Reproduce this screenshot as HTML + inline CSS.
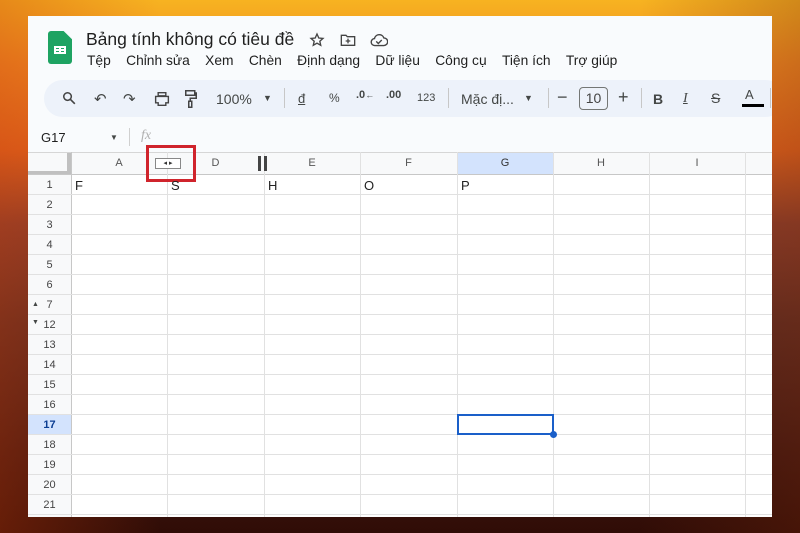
<!DOCTYPE html>
<html><head><meta charset="utf-8"><style>
*{margin:0;padding:0;box-sizing:border-box}
body{width:800px;height:533px;overflow:hidden;position:relative;font-family:"Liberation Sans",Arial,sans-serif;
background:linear-gradient(180deg,#f7b321 0%,#f08a22 12%,#e0641e 28%,#8a3e2c 42%,#5e2c22 60%,#3e1610 85%,#300c06 100%);}
.bg2{position:absolute;inset:0;background:linear-gradient(90deg,rgba(200,60,10,.35),rgba(0,0,0,0) 20%,rgba(0,0,0,0) 80%,rgba(120,40,10,.3));}
.panel{position:absolute;left:28px;top:16px;width:744px;height:501px;background:#f9fbfd;overflow:hidden}
.abs{position:absolute}
.t{position:absolute;white-space:nowrap;color:#444746}
.grid{position:absolute;left:0;top:136px;width:744px;height:365px;background:#fff}
.vl{position:absolute;top:0;width:1px;background:#e1e1e1;height:365px}
.hl{position:absolute;left:0;height:1px;background:#e1e1e1;width:744px}
.rn{position:absolute;left:0;width:43px;text-align:center;font-size:11px;color:#444}
.ch{position:absolute;top:0;height:23px;line-height:23px;text-align:center;font-size:11px;color:#555}
.cv{position:absolute;font-size:13px;color:#222}
</style></head><body><div class="bg2"></div>
<div class="panel">
 <div class="abs" style="left:20px;top:15px;width:24px;height:33px;background:#1ea362;border-radius:3px;clip-path:polygon(0 0,65% 0,100% 25%,100% 100%,0 100%)"></div>
 <div class="abs" style="left:26px;top:30px;width:12px;height:8px;border:2px solid #fff;background:#1ea362"></div>
 <div class="abs" style="left:31px;top:30px;width:2px;height:8px;background:#fff"></div>
 <div class="abs" style="left:26px;top:33px;width:12px;height:2px;background:#fff"></div>
 <div class="t" style="left:58px;top:13px;font-size:17.5px;color:#1f1f1f">Bảng tính không có tiêu đề</div>
 <svg class="abs" style="left:281px;top:16px" width="16" height="16" viewBox="0 0 24 24"><path d="M12 3l2.7 6 6.3.6-4.8 4.2 1.4 6.2L12 16.8 6.4 20l1.4-6.2L3 9.6l6.3-.6z" fill="none" stroke="#444" stroke-width="2"/></svg>
 <svg class="abs" style="left:312px;top:17px" width="16" height="14" viewBox="0 0 24 20"><path d="M2 3h7l2 2h11v13H2z" fill="none" stroke="#444" stroke-width="2"/><path d="M12 8v7M8.5 11.5h7" stroke="#444" stroke-width="2"/></svg>
 <svg class="abs" style="left:342px;top:17px" width="18" height="14" viewBox="0 0 26 20"><path d="M7 18a5 5 0 0 1-.5-10A7 7 0 0 1 20 7a5 5 0 0 1 0 11z" fill="none" stroke="#444" stroke-width="2"/><path d="M9 12l3 3 5-5" fill="none" stroke="#444" stroke-width="2"/></svg>
 <div class="t" style="left:59px;top:37px;font-size:13.8px;color:#1f1f1f">Tệp&nbsp;&nbsp;&nbsp;&nbsp;Chỉnh sửa&nbsp;&nbsp;&nbsp;&nbsp;Xem&nbsp;&nbsp;&nbsp;&nbsp;Chèn&nbsp;&nbsp;&nbsp;&nbsp;Định dạng&nbsp;&nbsp;&nbsp;&nbsp;Dữ liệu&nbsp;&nbsp;&nbsp;&nbsp;Công cụ&nbsp;&nbsp;&nbsp;&nbsp;Tiện ích&nbsp;&nbsp;&nbsp;&nbsp;Trợ giúp</div>
 <div class="abs" style="left:16px;top:64px;width:740px;height:37px;background:#edf2fa;border-radius:19px"></div>
 <svg class="abs" style="left:34px;top:75px" width="14" height="14" viewBox="0 0 24 24"><circle cx="9.5" cy="9.5" r="6.5" fill="none" stroke="#444" stroke-width="2.6"/><path d="M14.5 14.5L22 22" stroke="#444" stroke-width="2.8"/></svg>
 <div class="t" style="left:66px;top:74px;font-size:15px">↶</div>
 <div class="t" style="left:95px;top:74px;font-size:15px">↷</div>
 <svg class="abs" style="left:126px;top:76px" width="16" height="14" viewBox="0 0 24 22"><path d="M6 1h12v5H6zM2 7h20v10h-4v4H6v-4H2z" fill="none" stroke="#444" stroke-width="2.2"/></svg>
 <svg class="abs" style="left:157px;top:74px" width="12" height="18" viewBox="0 0 16 24"><path d="M1 1h12v6H1zM13 4h2v7H7v4M5 15h4v8H5z" fill="none" stroke="#444" stroke-width="2"/></svg>
 <div class="t" style="left:188px;top:75px;font-size:14px">100%</div>
 <div class="t" style="left:235px;top:77px;font-size:9px">▼</div>
 <div class="abs" style="left:256px;top:72px;width:1px;height:20px;background:#c7c7c7"></div>
 <div class="t" style="left:270px;top:75px;font-size:13px;text-decoration:underline">đ</div>
 <div class="t" style="left:301px;top:75px;font-size:12px">%</div>
 <div class="t" style="left:328px;top:73px;font-size:11px;font-weight:bold">.0<span style="font-size:9px">←</span></div>
 <div class="t" style="left:358px;top:73px;font-size:11px;font-weight:bold">.00</div>
 <div class="t" style="left:389px;top:76px;font-size:11px">123</div>
 <div class="abs" style="left:420px;top:72px;width:1px;height:20px;background:#c7c7c7"></div>
 <div class="t" style="left:433px;top:75px;font-size:14px">Mặc đị...</div>
 <div class="t" style="left:496px;top:77px;font-size:9px">▼</div>
 <div class="abs" style="left:520px;top:72px;width:1px;height:20px;background:#c7c7c7"></div>
 <div class="t" style="left:529px;top:71px;font-size:18px">−</div>
 <div class="abs" style="left:551px;top:71px;width:29px;height:23px;border:1.5px solid #747775;border-radius:4px;font-size:14px;color:#444;text-align:center;line-height:20px">10</div>
 <div class="t" style="left:590px;top:71px;font-size:18px">+</div>
 <div class="abs" style="left:613px;top:72px;width:1px;height:20px;background:#c7c7c7"></div>
 <div class="t" style="left:625px;top:75px;font-size:14px;font-weight:bold">B</div>
 <div class="t" style="left:655px;top:75px;font-size:14px;font-style:italic;font-family:'Liberation Serif',serif;text-decoration:underline">I</div>
 <div class="t" style="left:683px;top:74px;font-size:14px;text-decoration:line-through">S</div>
 <div class="t" style="left:717px;top:71px;font-size:13px">A</div>
 <div class="abs" style="left:714px;top:88px;width:22px;height:3px;background:#000"></div>
 <div class="abs" style="left:742px;top:72px;width:1px;height:20px;background:#c7c7c7"></div>
 <div class="t" style="left:13px;top:114px;font-size:13px;color:#1f1f1f">G17</div>
 <div class="t" style="left:82px;top:117px;font-size:8px">▼</div>
 <div class="abs" style="left:101px;top:112px;width:1px;height:18px;background:#d0d0d0"></div>
 <div class="t" style="left:113px;top:112px;font-size:14px;font-style:italic;color:#b0b0b0;font-family:'Liberation Serif',serif">fx</div>
 <div class="grid">
  <div class="abs" style="left:0;top:0;width:744px;height:23px;background:#f8f9fa"></div>
  <div class="abs" style="left:0;top:0;width:43px;height:365px;background:#f8f9fa"></div>
  <div class="abs" style="left:429px;top:0;width:96px;height:23px;background:#d3e3fd"></div>
  <div class="abs" style="left:0;top:263px;width:43px;height:20px;background:#d3e3fd"></div>
  <div class="abs" style="left:39px;top:0;width:4px;height:23px;background:#c0c0c0"></div>
  <div class="abs" style="left:0;top:19px;width:43px;height:4px;background:#c0c0c0"></div>
  <div class="hl" style="top:0;background:#d6d6d6"></div>
  <div class="hl" style="top:22px;background:#c7c7c7"></div>
  <div class="vl" style="left:43px;background:#c7c7c7"></div>
  <div class="vl" style="left:139px"></div><div class="vl" style="left:236px"></div><div class="vl" style="left:332px"></div><div class="vl" style="left:429px"></div><div class="vl" style="left:525px"></div><div class="vl" style="left:621px"></div><div class="vl" style="left:717px"></div>
  <div class="abs" style="left:230px;top:4px;width:3px;height:15px;background:#444"></div>
  <div class="abs" style="left:236px;top:4px;width:3px;height:15px;background:#444"></div>
  <div class="ch" style="left:43px;width:96px">A</div>
  <div class="abs" style="left:127px;top:6px;width:26px;height:11px;border:1px solid #888;background:#fff;font-size:7px;line-height:9px;text-align:center;color:#333">◂ ▸</div>
  <div class="abs" style="left:118px;top:-7px;width:50px;height:37px;border:3px solid #d0242c"></div>
  <div class="ch" style="left:139px;width:97px">D</div>
  <div class="ch" style="left:236px;width:96px">E</div>
  <div class="ch" style="left:332px;width:97px">F</div>
  <div class="ch" style="left:429px;width:96px;color:#333">G</div>
  <div class="ch" style="left:525px;width:96px">H</div>
  <div class="ch" style="left:621px;width:96px">I</div>
  <div class="cv" style="left:47px;top:26px">F</div>
  <div class="cv" style="left:143px;top:26px">S</div>
  <div class="cv" style="left:240px;top:26px">H</div>
  <div class="cv" style="left:336px;top:26px">O</div>
  <div class="cv" style="left:433px;top:26px">P</div>
  <div class="hl" style="top:42px"></div><div class="hl" style="top:62px"></div><div class="hl" style="top:82px"></div><div class="hl" style="top:102px"></div><div class="hl" style="top:122px"></div><div class="hl" style="top:142px"></div><div class="hl" style="top:162px"></div><div class="hl" style="top:182px"></div><div class="hl" style="top:202px"></div><div class="hl" style="top:222px"></div><div class="hl" style="top:242px"></div><div class="hl" style="top:262px"></div><div class="hl" style="top:282px"></div><div class="hl" style="top:302px"></div><div class="hl" style="top:322px"></div><div class="hl" style="top:342px"></div><div class="hl" style="top:362px"></div>
  <div class="rn" style="top:27px">1</div><div class="rn" style="top:47px">2</div><div class="rn" style="top:67px">3</div><div class="rn" style="top:87px">4</div><div class="rn" style="top:107px">5</div><div class="rn" style="top:127px">6</div>
  <div class="rn" style="top:147px">7</div><div class="t" style="left:4px;top:149px;font-size:7px">▲</div>
  <div class="rn" style="top:167px">12</div><div class="t" style="left:4px;top:167px;font-size:7px">▼</div>
  <div class="rn" style="top:187px">13</div><div class="rn" style="top:207px">14</div><div class="rn" style="top:227px">15</div><div class="rn" style="top:247px">16</div>
  <div class="rn" style="top:267px;font-weight:bold;color:#0b3d91">17</div>
  <div class="rn" style="top:287px">18</div><div class="rn" style="top:307px">19</div><div class="rn" style="top:327px">20</div><div class="rn" style="top:347px">21</div>
  <div class="abs" style="left:429px;top:262px;width:97px;height:21px;border:2px solid #1a5fc9"></div>
  <div class="abs" style="left:522px;top:279px;width:7px;height:7px;border-radius:50%;background:#1a5fc9"></div>
 </div>
</div>
</body></html>
